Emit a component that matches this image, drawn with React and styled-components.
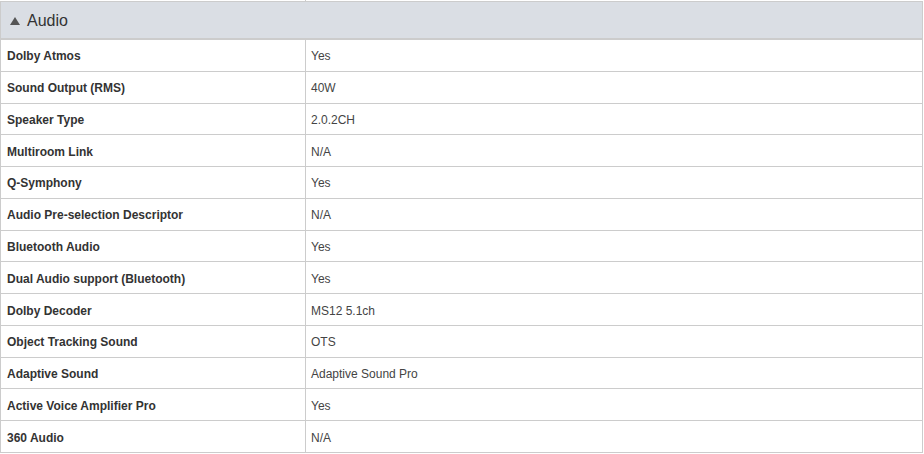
import React from "react";
import styled, { createGlobalStyle } from "styled-components";

const GlobalStyle = createGlobalStyle`
  html, body {
    margin: 0;
    padding: 0;
    background: #ffffff;
    font-family: "Liberation Sans", Arial, sans-serif;
  }
`;

const Page = styled.div`
  width: 924px;
  height: 454px;
  overflow: hidden;
  background: #fff;
`;

// tail of the previous spec table peeking in at the top
const PrevTail = styled.div`
  display: grid;
  grid-template-columns: 306px 1fr;
  height: 1px;

  div:first-child {
    border-right: 1px solid #cccccc;
  }
`;

const Section = styled.section`
  border-left: 1px solid #cccccc;
  border-right: 1px solid #cccccc;
  width: 923px;
  box-sizing: border-box;
`;

const SectionHeader = styled.div`
  display: flex;
  align-items: center;
  gap: 7px;
  height: 39px;
  box-sizing: border-box;
  padding: 1px 0 0 9px;
  background: #dadee4;
  border-top: 1px solid #cccccc;
  border-bottom: 2px solid #cccccc;
  color: #333333;
  font-size: 16px;
`;

const Caret = styled.span`
  width: 0;
  height: 0;
  border-left: 5px solid transparent;
  border-right: 5px solid transparent;
  border-bottom: 8px solid #555555;
  margin-top: 1px;
`;

const Row = styled.div`
  display: grid;
  grid-template-columns: 305px 1fr;
  height: 31.77px;
  box-sizing: border-box;
  border-bottom: 1px solid #cccccc;
  font-size: 12px;
`;

const Cell = styled.div`
  display: flex;
  align-items: center;
  padding-top: 2px;
  padding-left: ${(p) => (p.$label ? "6px" : "5px")};
  font-weight: ${(p) => (p.$label ? 700 : 400)};
  color: ${(p) => (p.$label ? "#333333" : "#444444")};
  border-right: ${(p) => (p.$label ? "1px solid #cccccc" : "none")};
  white-space: nowrap;
`;

const specs = [
  ["Dolby Atmos", "Yes"],
  ["Sound Output (RMS)", "40W"],
  ["Speaker Type", "2.0.2CH"],
  ["Multiroom Link", "N/A"],
  ["Q-Symphony", "Yes"],
  ["Audio Pre-selection Descriptor", "N/A"],
  ["Bluetooth Audio", "Yes"],
  ["Dual Audio support (Bluetooth)", "Yes"],
  ["Dolby Decoder", "MS12 5.1ch"],
  ["Object Tracking Sound", "OTS"],
  ["Adaptive Sound", "Adaptive Sound Pro"],
  ["Active Voice Amplifier Pro", "Yes"],
  ["360 Audio", "N/A"],
];

const App = () => {
  return (
    <Page>
      <GlobalStyle />
      <PrevTail>
        <div />
        <div />
      </PrevTail>
      <Section>
        <SectionHeader>
          <Caret />
          Audio
        </SectionHeader>
        {specs.map(([label, value]) => (
          <Row key={label}>
            <Cell $label>{label}</Cell>
            <Cell>{value}</Cell>
          </Row>
        ))}
      </Section>
    </Page>
  );
};

export default App;
